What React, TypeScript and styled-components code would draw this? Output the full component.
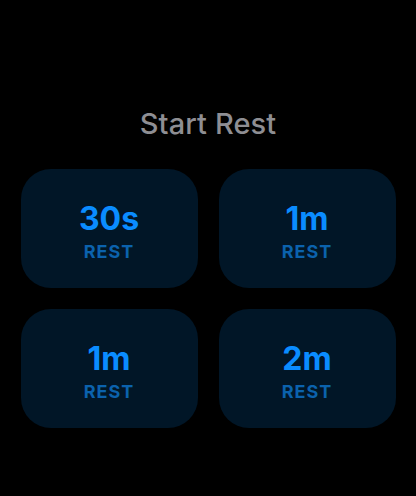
import React from 'react';
import styled, { createGlobalStyle } from 'styled-components';

const GlobalStyle = createGlobalStyle`
  html, body {
    margin: 0;
    padding: 0;
    background: #000;
  }
  body {
    font-family: Inter, "Noto Sans", sans-serif;
  }
`;

const options = [
  { label: '30s' },
  { label: '1m' },
  { label: '1m' },
  { label: '2m' },
];

const App: React.FC = () => {
  return (
    <>
      <GlobalStyle />
      <Screen>
        <Title>Start Rest</Title>
        <Grid>
          {options.map((o, i) => (
            <RestCard key={i}>
              <Amount>{o.label}</Amount>
              <Caption>REST</Caption>
            </RestCard>
          ))}
        </Grid>
      </Screen>
    </>
  );
};

const Screen = styled.div`
  width: 416px;
  height: 496px;
  background: #000;
  display: flex;
  flex-direction: column;
  align-items: center;
  padding-top: 107px;
  box-sizing: border-box;
`;

const Title = styled.h1`
  margin: 0 0 28px;
  font-size: 29px;
  line-height: 34px;
  font-weight: 500;
  color: #8e8e93;
  letter-spacing: 0.1px;
`;

const Grid = styled.div`
  display: grid;
  grid-template-columns: repeat(2, 177px);
  grid-auto-rows: 119px;
  gap: 21px;
`;

const RestCard = styled.div`
  background: #011627;
  border-radius: 30px;
  display: flex;
  flex-direction: column;
  align-items: center;
  justify-content: center;
  padding-top: 6px;
  box-sizing: border-box;
`;

const Amount = styled.div`
  font-size: 32px;
  line-height: 36px;
  font-weight: 700;
  color: #0a8cff;
`;

const Caption = styled.div`
  margin-top: 4px;
  font-size: 18px;
  line-height: 22px;
  font-weight: 700;
  letter-spacing: 1px;
  color: #0b62ad;
`;

export default App;
